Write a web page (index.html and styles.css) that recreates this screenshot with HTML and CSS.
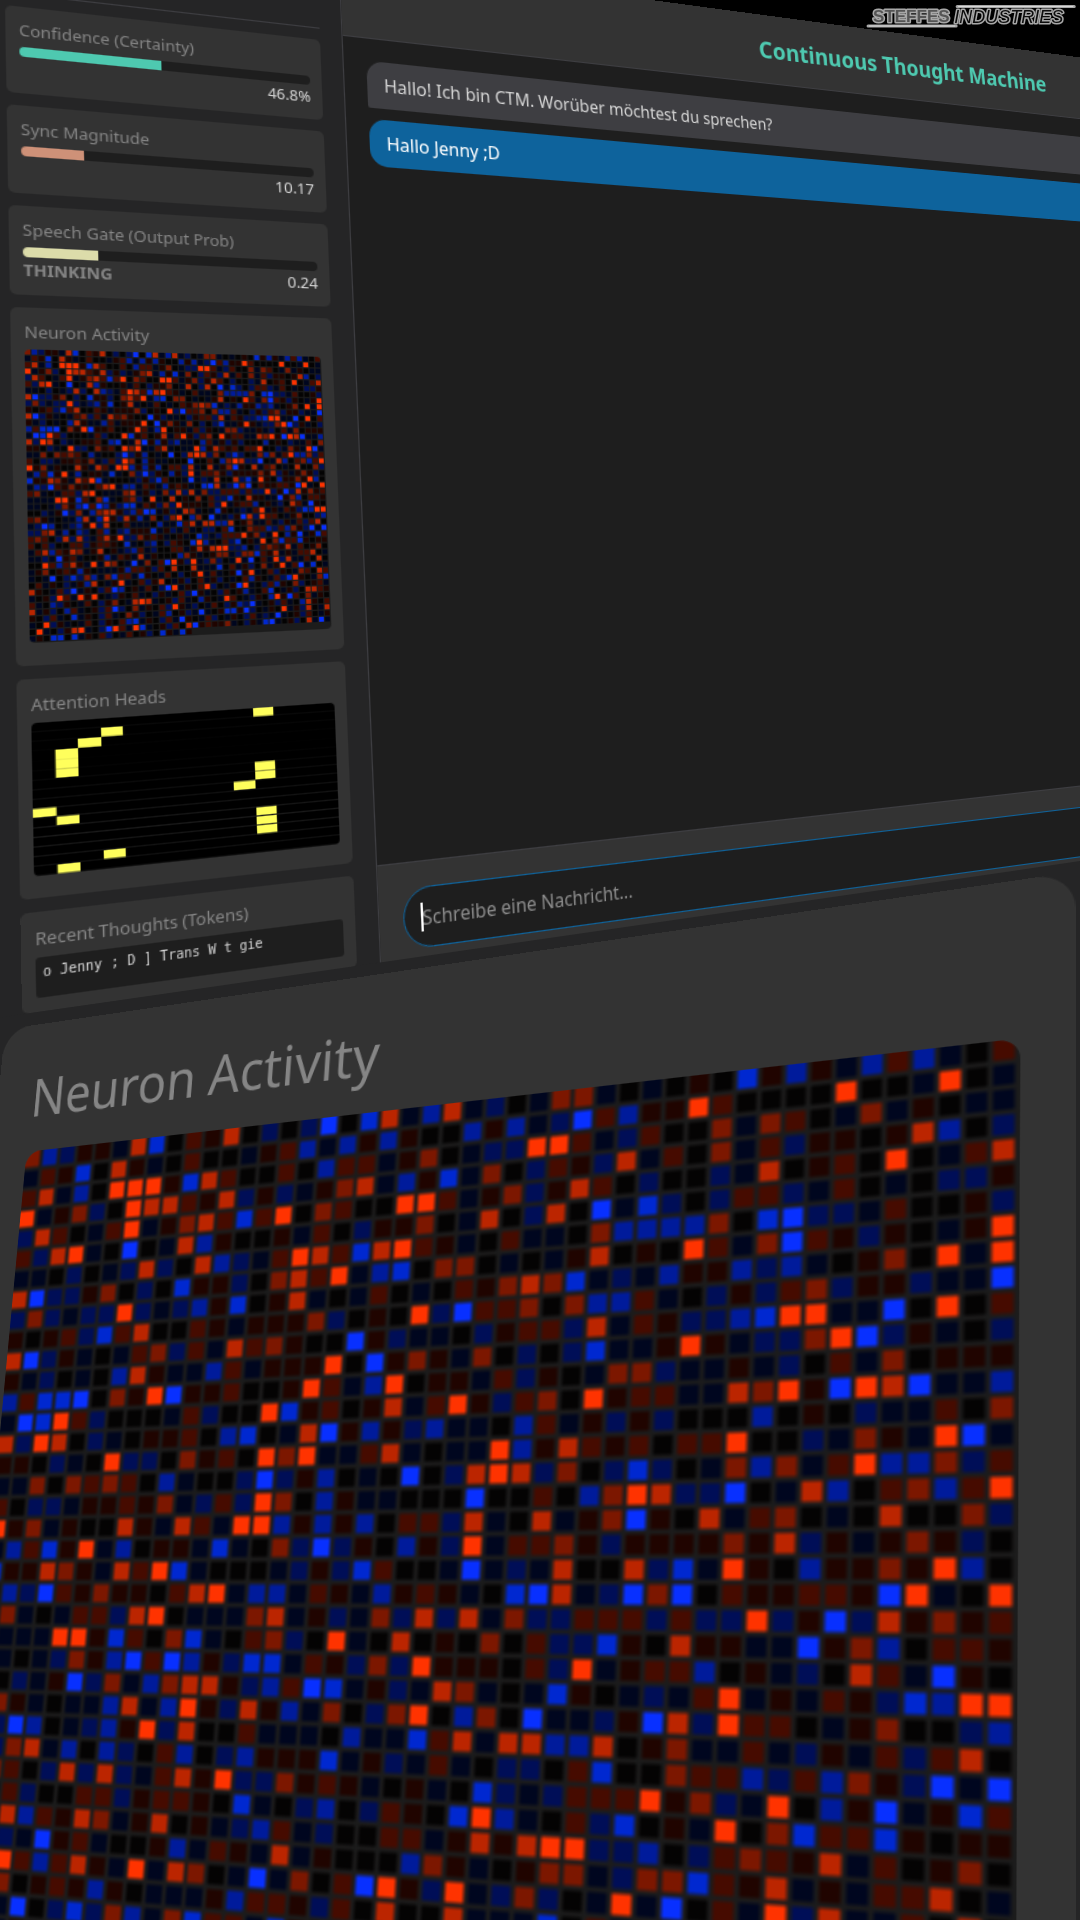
FILE: index.html
```html
<!DOCTYPE html>
<html lang="de">
<head>
<meta charset="utf-8">
<meta name="viewport" content="width=device-width, initial-scale=1">
<title>Continuous Thought Machine</title>
<link rel="stylesheet" href="styles.css">
</head>
<body>
<main class="scene">
  <div class="page plane" id="page">
    <aside class="sidebar">
      <div class="sidebar-head"></div>
      <section class="card metric">
        <h3 class="label">Confidence (Certainty)</h3>
        <div class="bar"><div class="fill teal" style="width:46.8%"></div></div>
        <div class="readout"><span class="value">46.8%</span></div>
      </section>
      <section class="card metric">
        <h3 class="label">Sync Magnitude</h3>
        <div class="bar"><div class="fill salmon" style="width:20.34%"></div></div>
        <div class="readout"><span class="value">10.17</span></div>
      </section>
      <section class="card metric">
        <h3 class="label">Speech Gate (Output Prob)</h3>
        <div class="bar"><div class="fill sand" style="width:24%"></div></div>
        <div class="readout"><strong class="state">THINKING</strong><span class="value">0.24</span></div>
      </section>
      <section class="card neurons">
        <h3 class="label">Neuron Activity</h3>
        <canvas class="neuron-map" width="230" height="225"></canvas>
      </section>
      <section class="card attention">
        <h3 class="label">Attention Heads</h3>
        <canvas class="attention-map" width="476" height="224"></canvas>
      </section>
      <section class="card thoughts">
        <h3 class="label">Recent Thoughts (Tokens)</h3>
        <div class="tokens">o Jenny ; D ] Trans W t gie</div>
      </section>
    </aside>
    <section class="chat">
      <header class="chat-head"><h1 class="title">Continuous Thought Machine</h1></header>
      <div class="messages">
        <p class="bubble bot">Hallo! Ich bin CTM. Worüber möchtest du sprechen?</p>
        <p class="bubble user">Hallo Jenny ;D</p>
      </div>
      <form class="composer">
        <label class="field">
          <input class="message" type="text" placeholder="Schreibe eine Nachricht..." aria-label="Nachricht">
          <span class="caret"></span>
        </label>
      </form>
    </section>
  </div>
  <div class="closeup">
    <section class="big-card plane" id="closeup">
      <h2 class="big-label">Neuron Activity</h2>
      <canvas class="neuron-map soft" width="230" height="225"></canvas>
    </section>
  </div>
  <svg class="logo" viewBox="0 0 220 32" role="img" aria-label="Steffes Industries">
    <g class="logo-glow">
      <path d="M97 6.5H214M8 26H96"/>
      <text x="13" y="22">STEFFES</text>
      <text class="slant" x="94" y="23">INDUSTRIES</text>
    </g>
    <g class="logo-core">
      <path d="M98 6.5H213M9 26H95"/>
      <text class="pale" x="13" y="22">STEFFES</text>
      <text class="slant" x="94" y="23">INDUSTRIES</text>
    </g>
  </svg>
</main>
<script src="app.js"></script>
</body>
</html>
```
FILE: styles.css
```css
* { box-sizing: border-box; }

body {
  margin: 0;
  background: #000;
  color: #d4d4d4;
  font-family: "Noto Sans", "Open Sans", sans-serif;
}

h1, h2, h3, p { margin: 0; font-weight: 400; }

.scene {
  position: relative;
  width: 100%;
  aspect-ratio: 9 / 16;
  overflow: hidden;
  background: #000;
}

/* Both panels are flat planes seen at an angle; app.js sets their projection. */
.plane {
  position: absolute;
  top: 0;
  left: 0;
  transform-origin: 0 0;
}

.page {
  display: flex;
  width: 1476px;
  height: 868px;
  background: #1e1e1e;
}

.sidebar {
  display: flex;
  flex-direction: column;
  flex: none;
  gap: 10px;
  width: 292px;
  padding: 20px 19px 20px 20px;
  background: #252526;
  border-right: 1px solid #3e3e42;
  box-shadow: -60px 0 0 #252526;
}

.sidebar-head {
  flex: none;
  height: 46px;
  border-bottom: 1px solid #3e3e42;
}

.card {
  flex: none;
  padding: 10px;
  border-radius: 5px;
  background: #333333;
}

.metric { height: 71px; }
.neurons { height: 276px; }
.attention { height: 162px; }
.thoughts { height: 72px; }

.label {
  height: 18px;
  margin-bottom: 5px;
  color: #858585;
  font-size: 13px;
  line-height: 18px;
}

.bar {
  height: 8px;
  border-radius: 4px;
  overflow: hidden;
  background: #1e1e1e;
}

.fill { height: 100%; }
.teal { background: #4ec9b0; }
.salmon { background: #ce9178; }
.sand { background: #dcdcaa; }

.readout {
  display: flex;
  line-height: 20px;
  font-size: 13px;
}

.value { margin-left: auto; }
.state { color: #858585; }

canvas { display: block; }

.card canvas { width: 100%; border-radius: 4px; }
.neurons canvas { height: 226px; }
.attention canvas { height: 113px; }

.tokens {
  height: 29px;
  padding: 5px;
  border-radius: 3px;
  background: #1e1e1e;
  font-family: "DejaVu Sans Mono", monospace;
  font-size: 10px;
  line-height: 12px;
}

.chat {
  display: flex;
  flex: 1;
  flex-direction: column;
}

.chat-head {
  display: flex;
  align-items: center;
  justify-content: center;
  height: 70px;
  background: #333333;
  border-bottom: 1px solid #3e3e42;
}

.title {
  color: #4ec9b0;
  font-size: 24px;
  font-weight: 700;
  line-height: 32px;
}

.messages {
  display: flex;
  flex: 1;
  flex-direction: column;
  gap: 10px;
  padding: 20px;
}

.bubble {
  padding: 10px 15px;
  border-radius: 15px;
  font-size: 16px;
  line-height: 22px;
}

.bot { background: #3e3e42; border-bottom-left-radius: 2px; }
.user { background: #0e639c; color: #fff; border-bottom-right-radius: 2px; }

.composer {
  height: 97px;
  padding: 20px;
  background: #333333;
  border-top: 1px solid #3e3e42;
}

.field { position: relative; display: block; }

.message {
  width: 100%;
  height: 49px;
  padding: 0 15px;
  border: 1px solid #0e639c;
  border-radius: 25px;
  outline: none;
  background: #1e1e1e;
  color: #fff;
  font-family: inherit;
  font-size: 16px;
}

.message::placeholder { color: #8c8c8c; opacity: 1; }

.caret {
  position: absolute;
  top: 13px;
  left: 15px;
  width: 2px;
  height: 23px;
  background: #fff;
}

.closeup {
  position: absolute;
  inset: 0;
  clip-path: polygon(0 53%, 100% 44.85%, 100% 100%, 0 100%);
  background: #252526;
}

.big-card {
  width: 1000px;
  padding: 40px 40px 60px 40px;
  border-radius: 30px;
  background: #333333;
}

.big-label {
  height: 70px;
  margin-bottom: 20px;
  color: #858585;
  font-size: 52px;
  line-height: 70px;
}

.big-card canvas {
  width: 920px;
  height: 900px;
  border-radius: 16px;
}

.logo {
  position: absolute;
  top: 0;
  right: 0;
  width: 20.4%;
  font-family: "Liberation Sans", Arial, sans-serif;
  font-size: 17px;
  font-weight: 700;
}

.slant { font-size: 18px; font-style: italic; font-weight: 400; }

.logo-glow {
  fill: #a8a8a8;
  stroke: #a8a8a8;
  stroke-width: 3;
  stroke-linejoin: round;
  stroke-linecap: round;
}

.logo-core { fill: #0c0c0c; }
.logo-core .pale { fill: #555; }
.logo-core path { stroke: #d8d8d8; stroke-width: 1; }
```
FILE: app.js
```js
// One string per row: "." is idle, 1-5 rising positive, a-e rising negative.
const activity = [
  "3cb11a4d.214.b.be.d4ac4ab.a33a.a.1.d1c1ac2ca.2",
  "a21d.41a.2..a12cac1c1..c1cabe2c1152....5..a5.a",
  "24ac.5551d42..2.c22a13.abb552ab2..3a32.a3a1.aa",
  "5a13b.544214b1ba134ac1da3.b21b4a2.3a2b11.14c.b",
  "b42.a25a1342d25.32..552a13b142.b..ba4.12.5.a24",
  "2b45a.e.a4c1..1a2.b113.a4.b4.eadb.b22ba2.a.bb1",
  "aa.b.ab4b.4cba2542d4521a.2aa.3cccc3.debba2..1b",
  "4ebb13.b.d11b.3425acd.33.a.a14.1.52a3e21b1.a15",
  "b3babb5babc1d.14a.a2.a.21343dabac11cbca.13.5a5",
  "1.12bd24..21a1113b.1.5be223.3cc2a.b1b23b11baae",
  "4eb1a.a23b2a4231..e1baa.b122b4a21bbcd55aae.5.2",
  "1ab.a.c41aac2a1115.e131a3.b.bdaa151abb35eb1a.b",
  "c2dde.315e112..152ac5.11a2b1.a33baa1ab.2a3.111",
  "aed52b...a2b..5d12.14a251b23.5122aa4351e54eaac",
  "4b54.ba.112.cd.a4e1c1bcaa.c2a1b1b...c.1.baa2.3",
  "11.ba.5bb.312.535aa24a.aa5c14212.225..ba31a5ea",
  "aa3.3232.ca..beb1c.a.e.b454b3.bdb.a3c3a25cc3b2",
  "2.bba11213ab2b53.c1aa...e..2.c354bbe.a4c.23c25",
  "513a1..41a42a55c1c1c.22b4a.4a13e1.4a23.a.4..3b",
  "ac2d15ac.11ada.3beb1.c1b5a2231b1111314b1a131b.",
  "d11431a425da...ab1bd2..aeaba4..4bda51.c11315c.",
  "acbe21311.245acca21ac121a.de4abe3e.211221e5a.5",
  "23a.a22b45.aaa34a1ba3b4b4a3bb222b2bb5b1eb41312",
  "aaaa551d2.3da.23b.5a.4.1.3.2bbd1.411aae13c.221",
  "aa.ab31ce2ec1bdda21b3b5111.2b5a122c.1ab.42ae1.",
  "..ba1eb3ac3441bc2eda1ba43a.ad1.aba25a1a21bdc55",
  "231a.aac4ac51b41ca3.b35.c3.eaab1e4b522.a13..bc",
  "abec.abc15b4..2aaa.caad24a44cc4.13aa2ab1a2b24.",
  "bb34ac.cb.2c.bc111da1ba2a.bb.2d..322cb2c31beae",
  "232.b4b4ba2415bb3121a.1a.dbab222513ba5.c1ea1d2",
  "2.2b..22b1221.da.bc.b21.d5ca.2bd.1a5.3d22d1.11",
  "a24c2143a14.1abc2ab..22a141455bbc.b23214a2.13.",
  "aabae12a..1ca21a4a1...c31a.133ab33d214a1a224.a",
  "..52c241a5a43.aea3.2e51b5ab3b.a5ae.2a5b4aa2.4.",
  "a13.121c1.aaa1c221b2.4..4aaad.2a1b.3a15a2ead.a",
  "a.ae.bdb3ca3d22ad1.a2.b.15a2a.1e15a.2b1.a32.42",
  ".2a1.ba1c4.a15a.2b14.a1b.2a1b.a.2c1.a2bd51.a3d",
  "41.a2bea1.b2ec.1a2.be5a1.25b.a1e5a.b2c1.3b.12a",
  "a.1b52a515.ab1.2a.b1a.2be1a.b2.1ca.2d.a1b.4421",
  "2a.cb1.a2.b13.a454a.1b2a.c1.a52.ab1.c51e2.3a1.",
  "4a1b.c2a.1b2eb.3a1.2b51ab.a2.b1cbea.1b2a.c41.2",
  "1.b2a.da1.b2a.31b.a2c.1baea.1dd1eb.a1.5a1b4.a4",
  "a.5b1a.a2.b1.2cda1.b2ae1.a2b.a1.b2abaea.1b2.a1",
  ".5a.b145a.be52a5da.1b2.4e12113a.b1adea.1b.4aea",
  "a1.dd.da1.2b.a2.1b.d1ad1"
];

const shades = {
  ".": "#040303",
  a: "#00061f", b: "#000e57", c: "#001b9b", d: "#0028d0", e: "#0830ff",
  1: "#200400", 2: "#460b00", 3: "#7c1700", 4: "#bb2500", 5: "#ff3300"
};

for (const canvas of document.querySelectorAll(".neuron-map")) {
  const ctx = canvas.getContext("2d");
  ctx.fillStyle = "#1c1c1c";
  ctx.fillRect(0, 0, 230, 225);
  activity.forEach((row, y) => {
    [...row].forEach((level, x) => {
      ctx.fillStyle = shades[level];
      ctx.fillRect(x * 5, y * 5, 4, 4);
    });
  });
  // The enlarged map is out of focus.
  if (canvas.classList.contains("soft")) {
    ctx.filter = "blur(0.6px)";
    ctx.drawImage(canvas, 0, 0);
  }
}

// Focused column for each of the 16 heads, out of 14 positions.
const focus = [10, 3, 2, 1, 1, 1, 10, 10, 9, 0, 1, 10, 10, 10, 3, 1];
for (const canvas of document.querySelectorAll(".attention-map")) {
  const ctx = canvas.getContext("2d");
  ctx.fillStyle = "#1a1a1a";
  ctx.fillRect(0, 0, 476, 224);
  focus.forEach((active, y) => {
    ctx.fillStyle = "#000";
    ctx.fillRect(0, y * 14, 476, 13);
    ctx.fillStyle = "#ffff5c";
    ctx.fillRect(active * 34, y * 14, 34, 13);
  });
}

// Solve the 3x3 projection that carries four plane points to four scene points.
function projection(from, to) {
  const m = [];
  from.forEach(([x, y], i) => {
    const [u, v] = to[i];
    m.push([x, y, 1, 0, 0, 0, -u * x, -u * y, u]);
    m.push([0, 0, 0, x, y, 1, -v * x, -v * y, v]);
  });
  for (let c = 0; c < 8; c++) {
    let p = c;
    for (let r = c + 1; r < 8; r++) if (Math.abs(m[r][c]) > Math.abs(m[p][c])) p = r;
    [m[c], m[p]] = [m[p], m[c]];
    for (let r = 0; r < 8; r++) {
      if (r === c) continue;
      const f = m[r][c] / m[c][c];
      for (let k = c; k < 9; k++) m[r][k] -= f * m[c][k];
    }
  }
  const h = m.map((row, i) => row[8] / row[i]);
  return `matrix3d(${[h[0], h[3], 0, h[6], h[1], h[4], 0, h[7], 0, 0, 1, 0, h[2], h[5], 0, 1].join(",")})`;
}

// Scene points are in units of a 1080-wide scene.
const planes = {
  page: {
    from: [[20, 76], [272, 76], [20, 848], [272, 848]],
    to: [[5, 5], [320, 40], [22, 1013], [357, 966]]
  },
  closeup: {
    from: [[48, 198], [948, 158], [948, 778], [168, 798]],
    to: [[27, 1219], [1004, 1075], [999, 1904], [78, 1865]]
  }
};

function place() {
  const scale = document.querySelector(".scene").clientWidth / 1080;
  for (const [id, { from, to }] of Object.entries(planes)) {
    const target = to.map(([x, y]) => [x * scale, y * scale]);
    document.getElementById(id).style.transform = projection(from, target);
  }
}

place();
addEventListener("resize", place);
```
